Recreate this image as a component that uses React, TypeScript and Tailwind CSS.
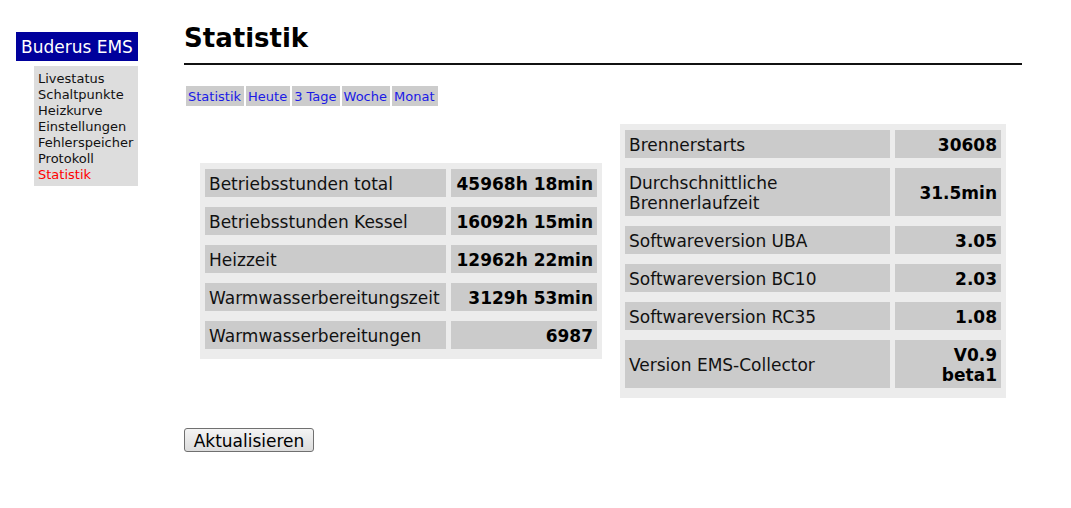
import React from "react";

const menu = [
  "Livestatus",
  "Schaltpunkte",
  "Heizkurve",
  "Einstellungen",
  "Fehlerspeicher",
  "Protokoll",
  "Statistik",
];

const tabs = ["Statistik", "Heute", "3 Tage", "Woche", "Monat"];

const betrieb: [string, string][] = [
  ["Betriebsstunden total", "45968h 18min"],
  ["Betriebsstunden Kessel", "16092h 15min"],
  ["Heizzeit", "12962h 22min"],
  ["Warmwasserbereitungszeit", "3129h 53min"],
  ["Warmwasserbereitungen", "6987"],
];

const brenner: [React.ReactNode, React.ReactNode][] = [
  ["Brennerstarts", "30608"],
  [
    <>
      Durchschnittliche
      <br />
      Brennerlaufzeit
    </>,
    "31.5min",
  ],
  ["Softwareversion UBA", "3.05"],
  ["Softwareversion BC10", "2.03"],
  ["Softwareversion RC35", "1.08"],
  [
    "Version EMS-Collector",
    <>
      V0.9
      <br />
      beta1
    </>,
  ],
];

function StatTable({
  rows,
  cols,
}: {
  rows: [React.ReactNode, React.ReactNode][];
  cols: string;
}) {
  return (
    <div className={`grid ${cols} gap-x-[5px] gap-y-[10px] bg-[#ececec] pt-[6px] px-[5px] pb-[10px]`}>
      {rows.map(([label, value], i) => (
        <React.Fragment key={i}>
          <div className="bg-[#cbcbcb] px-[4px] pt-[5px] pb-[3px] leading-[20px] text-[#111] flex items-center">
            {label}
          </div>
          <div className="bg-[#cbcbcb] px-[4px] pt-[5px] pb-[3px] leading-[20px] font-bold text-black text-right flex items-center justify-end">
            <span>{value}</span>
          </div>
        </React.Fragment>
      ))}
    </div>
  );
}

export default function App() {
  return (
    <div className="flex bg-white min-h-[508px] font-['DejaVu_Sans',Verdana,sans-serif] text-black">
      <aside className="ml-[16px] mt-[32px] w-[122px] shrink-0">
        <div className="bg-[#00009c] text-white text-[17px] leading-[21px] px-[5px] pt-[5px] pb-[3px]">
          Buderus EMS
        </div>
        <ul className="mt-[5px] ml-[18px] bg-[#dddddd] px-[4px] pt-[5px] pb-[3px] text-[13px] leading-[16px]">
          {menu.map((m) => (
            <li key={m} className={m === "Statistik" ? "text-[#ff0000]" : "text-[#111]"}>
              {m}
            </li>
          ))}
        </ul>
      </aside>

      <main className="ml-[46px] w-[838px]">
        <h1 className="mt-[23px] text-[26px] leading-[30px] font-bold">Statistik</h1>
        <div className="mt-[10px] h-[2px] bg-[#111]" />

        <nav className="mt-[21px] flex gap-[2px] ml-[2px] text-[13px] leading-[20px]">
          {tabs.map((t) => (
            <a key={t} className="bg-[#cccccc] text-[#1a1ae6] pl-[2px] pr-[3px] pt-[1px] pb-0 cursor-pointer leading-[19px]">
              {t}
            </a>
          ))}
        </nav>

        <div className="mt-[18px] ml-[16px] flex items-center gap-[18px] text-[17px]">
          <StatTable rows={betrieb} cols="grid-cols-[241px_146px]" />
          <StatTable rows={brenner} cols="grid-cols-[265px_106px]" />
        </div>

        <button className="mt-[30px] h-[24px] w-[130px] border border-[#707070] rounded-[3px] bg-gradient-to-b from-[#f4f4f4] to-[#dcdcdc] text-[17px] leading-[20px] pt-[1px] text-black">
          Aktualisieren
        </button>
      </main>
    </div>
  );
}
